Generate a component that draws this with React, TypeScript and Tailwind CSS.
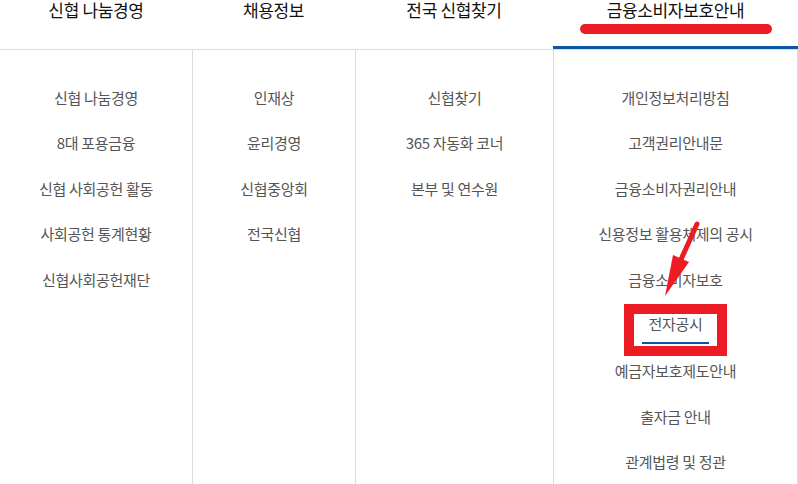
const columns = [
  {
    title: '신협 나눔경영',
    width: 'w-[192px]',
    items: ['신협 나눔경영', '8대 포용금융', '신협 사회공헌 활동', '사회공헌 통계현황', '신협사회공헌재단'],
  },
  {
    title: '채용정보',
    width: 'w-[163px]',
    items: ['인재상', '윤리경영', '신협중앙회', '전국신협'],
  },
  {
    title: '전국 신협찾기',
    width: 'w-[198px]',
    items: ['신협찾기', '365 자동화 코너', '본부 및 연수원'],
  },
  {
    title: '금융소비자보호안내',
    width: 'w-[245px]',
    items: [
      '개인정보처리방침',
      '고객권리안내문',
      '금융소비자권리안내',
      '신용정보 활용체제의 공시',
      '금융소비자보호',
      '전자공시',
      '예금자보호제도안내',
      '출자금 안내',
      '관계법령 및 정관',
    ],
  },
];

const font = { fontFamily: '"Noto Sans CJK KR", "Noto Sans", sans-serif' };

export default function App() {
  return (
    <div className="relative w-[798px] h-[484px] overflow-hidden bg-white" style={font}>
      {/* top menu */}
      <div className="flex h-[50px] border-b border-[#dcdcdc]">
        {columns.map((col, i) => (
          <div key={col.title} className={`${col.width} flex flex-col items-center`}>
            <span className="h-[20px] text-[17px] leading-[20px] tracking-[-0.02em] text-[#111]">{col.title}</span>
            {i === 3 && (
              <>
                <div className="mt-[4px] h-[10px] w-[192px] rounded-full bg-[#ed1c24]" />
                <div className="mt-auto h-[3px] w-full bg-[#0b57a4]" />
              </>
            )}
          </div>
        ))}
      </div>

      {/* sub menu */}
      <div className="flex h-[434px]">
        {columns.map((col, i) => (
          <ul
            key={col.title}
            className={`${col.width} pt-[25px] ${i > 0 ? 'border-l border-[#dcdcdc]' : ''} ${i === 3 ? 'border-r border-[#dcdcdc]' : ''}`}
          >
            {col.items.map((item) => (
              <li
                key={item}
                className="flex h-[45.6px] items-center justify-center text-[15px] tracking-[-0.02em] text-[#555]"
              >
                {item === '전자공시' ? (
                  <span className="mt-[8px] flex h-[52px] w-[103px] flex-col items-center border-[10px] border-[#ed1c24]">
                    <span className="h-[20px] leading-[20px]">{item}</span>
                    <span className="mt-[8px] h-[2px] w-[67px] bg-[#0b57a4]" />
                  </span>
                ) : (
                  item
                )}
              </li>
            ))}
          </ul>
        ))}
      </div>

      {/* annotation arrow */}
      <svg className="absolute left-[640px] top-[215px]" width="70" height="90" viewBox="640 215 70 90">
        <line x1="697" y1="224" x2="679" y2="264" stroke="#ed1c24" strokeWidth="5" strokeLinecap="round" />
        <polygon points="665,296 689,262 673,255" fill="#ed1c24" />
      </svg>
    </div>
  );
}
